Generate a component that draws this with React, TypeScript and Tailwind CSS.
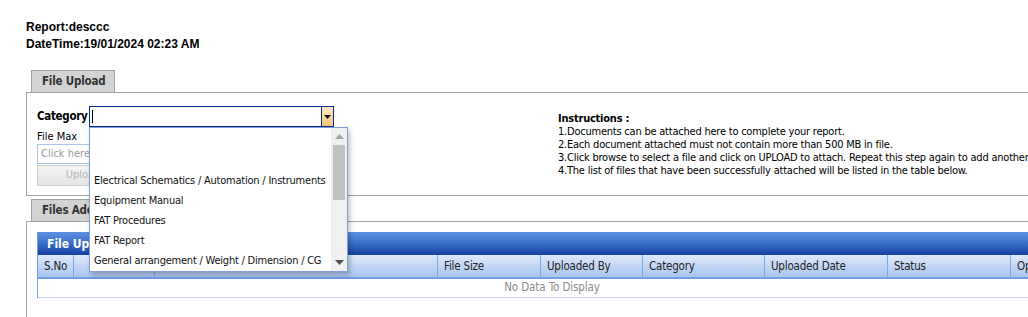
import { useState } from "react";

const categories = [
  "",
  "",
  "Electrical Schematics / Automation / Instruments",
  "Equipment Manual",
  "FAT Procedures",
  "FAT Report",
  "General arrangement / Weight / Dimension / CG",
];

const columns = [
  { label: "S.No", w: "w-[36px]" },
  { label: "", w: "w-[81px]" },
  { label: "File Name", w: "w-[283px]" },
  { label: "File Size", w: "w-[103px]" },
  { label: "Uploaded By", w: "w-[102px]" },
  { label: "Category", w: "w-[122px]" },
  { label: "Uploaded Date", w: "w-[123px]" },
  { label: "Status", w: "w-[123px]" },
  { label: "Options", w: "w-[100px]" },
];

const instructions = [
  "1.Documents can be attached here to complete your report.",
  "2.Each document attached must not contain more than 500 MB in file.",
  "3.Click browse to select a file and click on UPLOAD to attach. Repeat this step again to add another file.",
  "4.The list of files that have been successfully attached will be listed in the table below.",
];

function Tab({ label, w }: { label: string; w: string }) {
  return (
    <div
      className={`ml-[5px] ${w} h-[22px] bg-[#d3d3d3] border border-b-0 border-[#a3a3a3] flex items-center pl-[10px] text-[11.5px] tracking-[-0.2px] font-bold text-[#333] overflow-hidden whitespace-nowrap`}
    >
      {label}
    </div>
  );
}

export default function App() {
  const [category] = useState("");

  return (
    <div className="w-[1028px] h-[317px] overflow-hidden bg-white relative font-['DejaVu_Sans_Condensed',sans-serif] text-[#222]">
      <div className="pl-[26px] pt-[19px]">
        {/* Report header */}
        <div className="font-['Liberation_Sans',sans-serif] font-bold text-[12px] leading-[17px] text-black">
          <div>Report:desccc</div>
          <div>DateTime:19/01/2024 02:23 AM</div>
        </div>

        {/* File upload tab */}
        <div className="mt-[17px]">
          <Tab label="File Upload" w="w-[84px]" />
          <div className="w-[1100px] h-[104px] border border-[#a3a3a3] flex pl-[10px] pt-[13px]">
            <div className="w-[300px]">
              <div className="flex items-center h-[21px]">
                <span className="w-[52px] text-[11.5px] tracking-[-0.3px] font-bold text-black">Category</span>
                <div className="w-[245px] h-[21px] border border-[#0a2a8a] flex">
                  <div className="flex-1 flex items-center pl-[2px]">
                    <div className="w-px h-[13px] bg-black" />
                    <span className="text-[11px]">{category}</span>
                  </div>
                  <div className="w-[12px] border-l border-[#0a2a8a] bg-gradient-to-b from-[#fde8c2] to-[#f6c47c] flex items-center justify-center">
                    <svg width="7" height="4" viewBox="0 0 7 4">
                      <path d="M0 0h7L3.5 4z" fill="#111" />
                    </svg>
                  </div>
                </div>
              </div>
              <div className="text-[11px] leading-[14px] mt-[3px] text-black">File Max</div>
              <div className="w-[200px] h-[20px] border border-[#a9c5ee] flex items-center pl-[3px] text-[11px] text-[#9a9a9a]">
                Click here to browse
              </div>
              <div className="w-[92px] h-[21px] mt-[1px] border border-[#d0d0d0] bg-gradient-to-b from-[#f6f6f6] to-[#e4e4e4] flex items-center justify-center text-[11px] text-[#b3b3b3]">
                Upload
              </div>
            </div>
            <div className="ml-[221px] pt-[6px] text-[11px] tracking-[-0.22px] leading-[13px] text-black whitespace-nowrap">
              <div className="font-bold">Instructions :</div>
              {instructions.map((t) => (
                <div key={t}>{t}</div>
              ))}
            </div>
          </div>
        </div>

        {/* Files added tab */}
        <div className="mt-[3px]">
          <Tab label="Files Added" w="w-[84px]" />
          <div className="w-[1100px] h-[120px] border border-[#a3a3a3] pl-[10px] pt-[10px]">
            <div className="w-[1100px] border-l border-[#6f9ee3]">
              <div className="h-[23px] bg-gradient-to-b from-[#5d92e0] via-[#3a6fc8] to-[#153f9c] flex items-center pl-[9px] text-[12px] font-bold text-white">
                File Uploaded List
              </div>
              <div className="flex h-[24px] bg-gradient-to-b from-[#dde9fb] to-[#a8c6ef] border-b-2 border-[#6f9ee3]">
                {columns.map((c, i) => (
                  <div
                    key={i}
                    className={`${c.w} shrink-0 border-r border-[#7ea9e4] flex items-center pl-[6px] pt-[2px] text-[11.5px] tracking-[-0.2px] text-[#222] whitespace-nowrap overflow-hidden`}
                  >
                    {c.label}
                  </div>
                ))}
              </div>
              <div className="w-[1028px] h-[19px] border-b border-[#c7d3e3] flex items-center justify-center text-[11.5px] tracking-[-0.1px] text-[#8c8c8c]">
                No Data To Display
              </div>
            </div>
          </div>
        </div>
      </div>

      {/* Category dropdown list */}
      <div className="absolute left-[89px] top-[127px] w-[259px] h-[145px] bg-white border border-[#7f9fd6] shadow-[2px_3px_5px_rgba(0,0,0,0.25)] flex">
        <div className="flex-1 overflow-hidden pt-[3px]">
          {categories.map((c, i) => (
            <div key={i} className="h-[20px] pl-[4px] flex items-center text-[11px] tracking-[-0.22px] text-[#111] whitespace-nowrap">
              {c}
            </div>
          ))}
        </div>
        <div className="w-[16px] bg-[#f0f0f0] flex flex-col items-center">
          <div className="h-[17px] flex items-center justify-center">
            <svg width="9" height="5" viewBox="0 0 9 5">
              <path d="M0 5h9L4.5 0z" fill="#a3a3a3" />
            </svg>
          </div>
          <div className="w-[12px] h-[55px] bg-[#c1c1c1]" />
          <div className="flex-1" />
          <div className="h-[17px] flex items-center justify-center">
            <svg width="9" height="5" viewBox="0 0 9 5">
              <path d="M0 0h9L4.5 5z" fill="#505050" />
            </svg>
          </div>
        </div>
      </div>
    </div>
  );
}
